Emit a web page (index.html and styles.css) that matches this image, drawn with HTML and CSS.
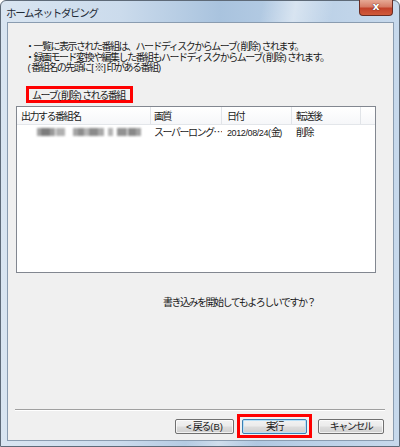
FILE: index.html
```html
<!DOCTYPE html>
<html lang="ja">
<head>
<meta charset="utf-8">
<link rel="stylesheet" href="styles.css">
</head>
<body>
<div class="window">
  <div class="titlebar">
    <span class="title">ホームネットダビング</span>
    <div class="close"><span>x</span></div>
  </div>
  <div class="client">
    <div class="intro">
      <div class="line">・一覧に表示された番組は、ハードディスクからムーブ<span class="lat">(</span>削除<span class="lat">)</span>されます。</div>
      <div class="line">・録画モード変換や編集した番組もハードディスクからムーブ<span class="lat">(</span>削除<span class="lat">)</span>されます。</div>
      <div class="line indent"><span class="lat">(</span>番組名の先頭に<span class="lat">[</span>※<span class="lat">]</span>印がある番組<span class="lat">)</span></div>
    </div>
    <div class="label">ムーブ<span class="lat">(</span>削除<span class="lat">)</span>される番組</div>
    <div class="listbox">
      <div class="header">
        <div class="col c1">出力する番組名</div>
        <div class="col c2">画質</div>
        <div class="col c3">日付</div>
        <div class="col c4">転送後</div>
        <div class="col c5"></div>
      </div>
      <div class="row">
        <div class="col c1">
          <svg class="blur" width="112" height="12" viewBox="0 0 112 12">
            <defs><filter id="b" x="-10%" y="-50%" width="120%" height="200%"><feGaussianBlur stdDeviation="0.8"/></filter></defs>
            <g filter="url(#b)">
              <rect x="4" y="2" width="4" height="8" fill="#a0a0a0"/>
              <rect x="8" y="2" width="9" height="8" fill="#7c7c7c"/>
              <rect x="17" y="2" width="5" height="8" fill="#9a9a9a"/>
              <rect x="23" y="2" width="9" height="8" fill="#b0b0b0"/>
              <rect x="40" y="2" width="5" height="8" fill="#a4a4a4"/>
              <rect x="45" y="2" width="6" height="8" fill="#8c8c8c"/>
              <rect x="51" y="2" width="5" height="8" fill="#b6b6b6"/>
              <rect x="56" y="2" width="9" height="8" fill="#8a8a8a"/>
              <rect x="65" y="2" width="6" height="8" fill="#a8a8a8"/>
              <rect x="75" y="2" width="5" height="8" fill="#b4b4b4"/>
              <rect x="84" y="2" width="10" height="8" fill="#929292"/>
              <rect x="95" y="2" width="8" height="8" fill="#888888"/>
              <rect x="103" y="2" width="5" height="8" fill="#a2a2a2"/>
            </g>
          </svg>
        </div>
        <div class="col c2 clip">スーパーロング…</div>
        <div class="col c3"><span class="lat num">2012/08/24(</span>金<span class="lat num">)</span></div>
        <div class="col c4">削除</div>
      </div>
    </div>
    <div class="question">書き込みを開始してもよろしいですか？</div>
    <div class="spacer"></div>
    <div class="separator"></div>
    <div class="buttons">
      <div class="btn back"><span class="lat">&lt;</span> 戻る<span class="lat">(B)</span></div>
      <div class="btn run default">実行<span class="mark"></span></div>
      <div class="btn cancel">キャンセル</div>
    </div>
  </div>
</div>
</body>
</html>
```
FILE: styles.css
```css
html, body {
  margin: 0;
  padding: 0;
  background: #ffffff;
}
body {
  width: 400px;
  height: 447px;
  overflow: hidden;
  font-family: "Noto Sans CJK JP", "Liberation Sans", sans-serif;
  font-size: 10px;
  letter-spacing: -1.5px;
  color: #1a1a1a;
}
.lat {
  font-family: "Liberation Sans", sans-serif;
  font-size: 9.5px;
  letter-spacing: 0;
  padding: 0 0.5px;
}
.num {
  font-size: 9px;
  letter-spacing: -0.4px;
  padding: 0;
}
.window {
  width: 400px;
  height: 447px;
  box-sizing: border-box;
  border: 1px solid #5e6a78;
  border-radius: 6px 6px 0 0;
  background:
    linear-gradient(100deg, rgba(255,255,255,0) 55%, rgba(255,255,255,0.45) 62%, rgba(255,255,255,0) 70%),
    linear-gradient(90deg, #d9e5f1 0%, #cbdbec 30%, #a9c3de 55%, #b9cfe6 75%, #c7d9ec 100%);
  display: flex;
  flex-direction: column;
}
.titlebar {
  height: 21px;
  flex: none;
  display: flex;
  align-items: flex-start;
  justify-content: space-between;
}
.title {
  font-size: 10.5px;
  letter-spacing: -1.3px;
  line-height: 12px;
  margin-top: 6px;
  margin-left: 5px;
  color: #1e2a36;
}
.close {
  width: 34px;
  height: 16px;
  margin-right: 6px;
  margin-top: -1px;
  box-sizing: border-box;
  border: 1px solid #6a2c22;
  border-top: none;
  border-radius: 0 0 4px 4px;
  background: linear-gradient(#e6a995 0%, #d67c66 45%, #c2422a 55%, #d05a3a 100%);
  display: flex;
  align-items: center;
  justify-content: center;
}
.close span {
  font-family: "DejaVu Sans", sans-serif;
  font-weight: bold;
  font-size: 11px;
  letter-spacing: 0;
  line-height: 11px;
  color: #ffffff;
  text-shadow: 0 0 1px #5a2015, 0 0 1px #5a2015;
  margin-top: -2px;
}
.client {
  flex: none;
  height: 419px;
  margin: 0 5px 0 6px;
  box-sizing: border-box;
  border: 1px solid #8a9cb0;
  background: #f0f0f0;
  display: flex;
  flex-direction: column;
}
.intro {
  margin-top: 18px;
  margin-left: 17px;
  line-height: 10.5px;
}
.line {
  height: 10.5px;
}
.indent {
  padding-left: 2px;
}
.label {
  margin-top: 13px;
  margin-left: 18px;
  width: 107px;
  height: 17px;
  box-sizing: border-box;
  border: 3px solid #ff0000;
  line-height: 11px;
  padding-left: 3px;
  white-space: nowrap;
  background: #f0f0f0;
}
.listbox {
  margin-top: 3px;
  margin-left: 8px;
  width: 360px;
  height: 167px;
  box-sizing: border-box;
  border: 1px solid #828790;
  background: #ffffff;
}
.header {
  display: flex;
  height: 17px;
  border-bottom: 1px solid #e3e6ea;
  background: linear-gradient(#ffffff, #f6f7f9);
}
.header .col {
  border-right: 1px solid #e1e4e8;
  line-height: 17px;
}
.row {
  display: flex;
  height: 14px;
  line-height: 14px;
}
.col {
  box-sizing: border-box;
  flex: none;
  white-space: nowrap;
  overflow: hidden;
}
.c1 { width: 134px; padding-left: 4px; }
.c2 { width: 71px; padding-left: 3px; }
.c3 { width: 70px; padding-left: 5px; }
.c4 { width: 69px; padding-left: 4px; }
.c5 { flex: 1; border-right: none !important; }
.row .c1 { padding-left: 16px; }
.blur { display: block; margin-top: 1px; }
.question {
  margin-top: 22px;
  margin-left: 155px;
  line-height: 14px;
}
.spacer { flex: 1; }
.separator {
  margin-left: 7px;
  width: 370px;
  height: 1px;
  background: #a0a0a0;
  border-bottom: 1px solid #ffffff;
  margin-bottom: 8px;
}
.buttons {
  display: flex;
  margin-left: 167px;
  margin-bottom: 6px;
  height: 15px;
}
.btn {
  position: relative;
  height: 15px;
  box-sizing: border-box;
  border: 1px solid #707070;
  border-radius: 2px;
  background: linear-gradient(#f2f2f2 0%, #ebebeb 48%, #dddddd 52%, #cfcfcf 100%);
  text-align: center;
  line-height: 12px;
  white-space: nowrap;
  box-shadow: inset 0 0 0 1px rgba(255,255,255,0.7);
}
.back { width: 59px; }
.run { width: 65px; margin-left: 8px; }
.cancel { width: 66px; margin-left: 11px; }
.default {
  border-color: #3c7fb1;
  box-shadow: inset 0 0 0 1px #b9e0f7;
}
.mark {
  position: absolute;
  left: -6px;
  top: -6px;
  right: -6px;
  bottom: -5px;
  border: 3px solid #ff0000;
}
```
